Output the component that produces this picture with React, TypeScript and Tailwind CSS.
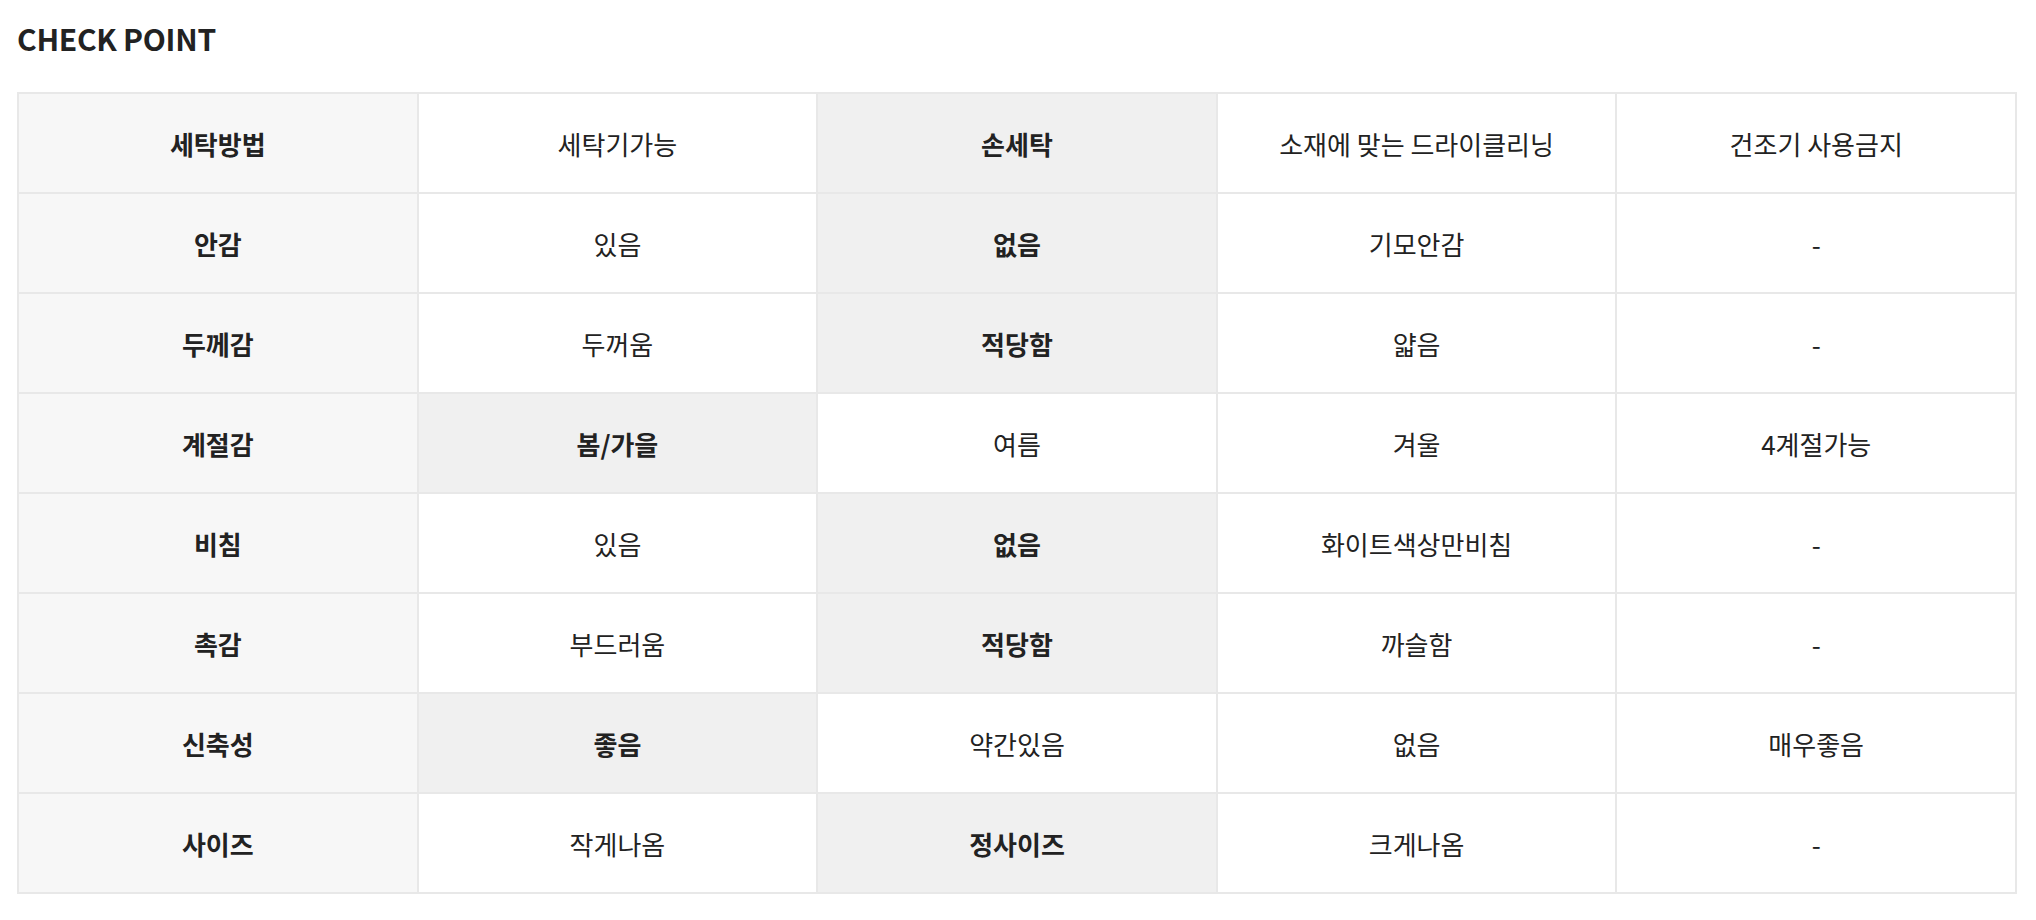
const rows: { label: string; cells: string[]; bold: number }[] = [
  { label: '세탁방법', cells: ['세탁기가능', '손세탁', '소재에 맞는 드라이클리닝', '건조기 사용금지'], bold: 1 },
  { label: '안감', cells: ['있음', '없음', '기모안감', '-'], bold: 1 },
  { label: '두께감', cells: ['두꺼움', '적당함', '얇음', '-'], bold: 1 },
  { label: '계절감', cells: ['봄/가을', '여름', '겨울', '4계절가능'], bold: 0 },
  { label: '비침', cells: ['있음', '없음', '화이트색상만비침', '-'], bold: 1 },
  { label: '촉감', cells: ['부드러움', '적당함', '까슬함', '-'], bold: 1 },
  { label: '신축성', cells: ['좋음', '약간있음', '없음', '매우좋음'], bold: 0 },
  { label: '사이즈', cells: ['작게나옴', '정사이즈', '크게나옴', '-'], bold: 1 },
];

export default function App() {
  return (
    <div className="min-h-screen bg-white px-[17px] pt-[18px] text-[#222] font-['Noto_Sans_CJK_KR','Noto_Sans',sans-serif]">
      <h2 className="text-[30px] font-bold leading-[40px] tracking-[-0.3px]">CHECK POINT</h2>

      {/* Check point table */}
      <table className="mt-[34px] w-[2000px] table-fixed border-collapse border-2 border-[#e8e8e8]">
        <tbody>
          {rows.map((row) => (
            <tr key={row.label}>
              <th className="h-[100px] border-2 border-[#e8e8e8] bg-[#f7f7f7] text-center text-[26px] font-bold">
                {row.label}
              </th>
              {row.cells.map((cell, i) => (
                <td
                  key={i}
                  className={
                    i === row.bold
                      ? 'h-[100px] border-2 border-[#e8e8e8] bg-[#f0f0f0] text-center text-[26px] font-bold'
                      : 'h-[100px] border-2 border-[#e8e8e8] bg-white text-center text-[26px] font-normal'
                  }
                >
                  {cell}
                </td>
              ))}
            </tr>
          ))}
        </tbody>
      </table>
    </div>
  );
}
